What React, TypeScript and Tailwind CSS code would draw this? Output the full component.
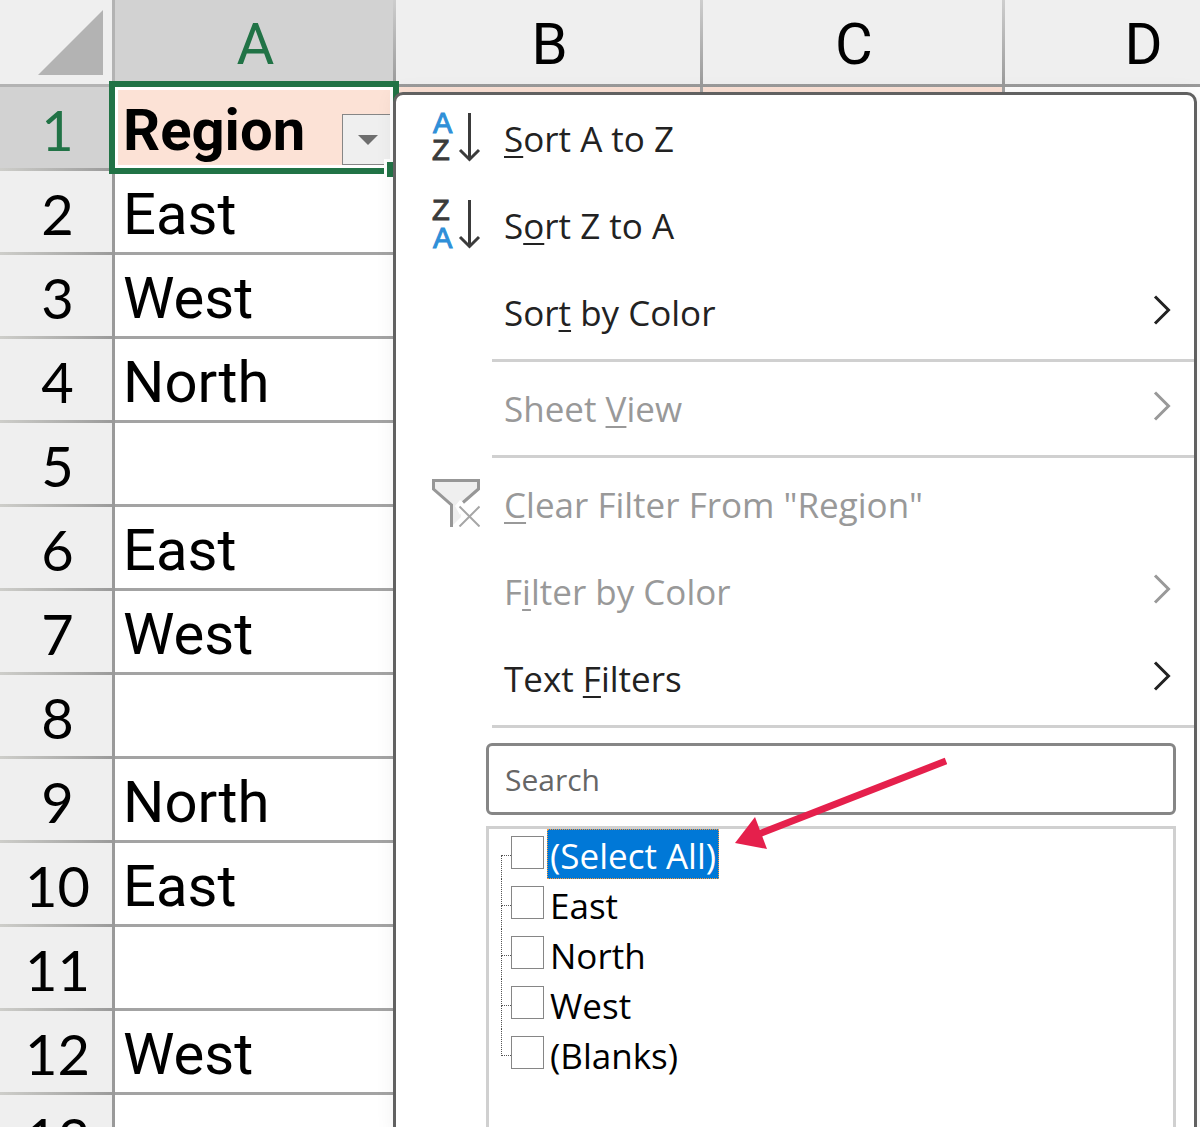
import React from 'react';

const columns = ['A', 'B', 'C', 'D'];

const rows = ['Region', 'East', 'West', 'North', '', 'East', 'West', '', 'North', 'East', '', 'West', ''];

const filterValues = ['(Select All)', 'East', 'North', 'West', '(Blanks)'];

const SortIcon = ({ descending = false }: { descending?: boolean }) => (
  <svg
    width="48"
    height="48"
    viewBox="0 0 48 48"
    className="overflow-visible font-['Liberation_Sans',sans-serif] text-[29px]"
    strokeWidth="1"
  >
    <text x="1" y={descending ? 48 : 20} fill="#2f8fd8" stroke="#2f8fd8">A</text>
    <text x="0" y={descending ? 20 : 47} fill="#3b3b3b" stroke="#3b3b3b">Z</text>
    <path d="M37.5 0V46M28 37L37.5 46.5L47 37" fill="none" stroke="#3b3b3b" strokeWidth="3" />
  </svg>
);

const ClearFilterIcon = () => (
  <svg width="48" height="48" viewBox="0 0 48 48" fill="none">
    <path d="M1.5 1.5H46.5V10L28 27L29 37L19.5 46V26L1.5 10Z" fill="#efefef" />
    <path d="M23 27L28 21L34 25L31 30L28 36Z" fill="#fff" />
    <path d="M21 26L29 38L21 46Z" fill="#efefef" />
    <path d="M19.5 48V26L1.5 10V1.5H46.5V10L31 23.5" stroke="#979797" strokeWidth="3" />
    <path d="M27.5 27.5L47.5 47.5M47.5 27.5L27.5 47.5" stroke="#a6a6a6" strokeWidth="2" />
  </svg>
);

const Chevron = () => (
  <svg width="18" height="30" viewBox="0 0 18 30" fill="none" className="mb-1.5 mr-[23px]">
    <path d="M2 1.5L15.5 15L2 28.5" stroke="currentColor" strokeWidth="3" />
  </svg>
);

type MenuItemProps = {
  icon?: React.ReactNode;
  disabled?: boolean;
  submenu?: boolean;
  children: React.ReactNode;
};

const MenuItem = ({ icon, disabled, submenu, children }: MenuItemProps) => (
  <button
    type="button"
    disabled={disabled}
    className="flex h-[87px] w-full shrink-0 items-center gap-6 pl-9 text-left text-[#222] disabled:text-[#999]"
  >
    <span className="h-[51px] w-12 shrink-0">{icon}</span>
    <span className="flex-1 whitespace-nowrap">{children}</span>
    {submenu && <Chevron />}
  </button>
);

const Key = ({ children }: { children: React.ReactNode }) => (
  <u className="decoration-2 underline-offset-4">{children}</u>
);

const Separator = () => <hr className="my-[3px] ml-24 h-[3px] shrink-0 border-0 bg-[#d0d0d0]" />;

const Sheet = () => (
  <table className="w-full min-w-[1282px] table-fixed border-separate border-spacing-0 font-[Roboto,sans-serif] text-[58px] leading-none text-black">
    <colgroup>
      <col className="w-[115px]" />
      <col className="w-[281px]" />
      <col className="w-[307px]" />
      <col className="w-[302px]" />
      <col />
    </colgroup>
    <thead>
      <tr className="h-[87px]">
        <td className="border-b-3 border-r-3 border-[#b3b3b3] bg-[#efefef] p-0">
          <svg width="65" height="65" viewBox="0 0 65 65" className="ml-auto mr-[9px]">
            <path d="M65 0V65H0Z" fill="#b3b3b3" />
          </svg>
        </td>
        {columns.map((name) => (
          <th
            key={name}
            scope="col"
            className={`border-b-3 border-r-3 p-0 pl-[3px] pt-1 font-normal [border-image:linear-gradient(to_bottom,#cfcfcf,#999)_3] ${
              name === 'A' ? 'bg-[#d2d2d2] text-[#217346]' : 'bg-[#efefef]'
            }`}
          >
            {name}
          </th>
        ))}
      </tr>
    </thead>
    <tbody>
      {rows.map((value, i) => (
        <tr key={i} className="h-[84px]">
          <th
            scope="row"
            className={`border-b-3 border-r-3 p-0 pl-[3px] pt-1 font-[Lato,sans-serif] text-[56px] font-normal [border-image:linear-gradient(to_right,#cfcfcb,#999)_3] ${
              i === 0 ? 'bg-[#d2d2d2] text-[#217346]' : 'bg-[#efefef]'
            }`}
          >
            {i + 1}
          </th>
          {i === 0 ? (
            <td className="relative border-b-3 border-r-3 border-[#a3a3a3] bg-[#fce2d6] p-0 pl-2 pt-1 font-bold">
              {value}
              <button
                type="button"
                aria-label="Filter Region"
                className="absolute bottom-[3px] right-0 flex h-[51px] w-[51px] items-center justify-center border border-[#868686] bg-[#efefef]"
              >
                <svg width="20" height="10" viewBox="0 0 20 10">
                  <path d="M0 0H20L10 10Z" fill="#6e6e6e" />
                </svg>
              </button>
              {/* active cell outline and fill handle */}
              <div className="pointer-events-none absolute -inset-1.5 border-6 border-[#217346]">
                <div className="h-full border-3 border-white" />
                <div className="absolute -bottom-3 -right-3 size-[21px] border-3 border-white bg-[#217346]" />
              </div>
            </td>
          ) : (
            <td className="border-b-3 border-r-3 border-[#a3a3a3] bg-white p-0 pl-2 pt-1">{value}</td>
          )}
          <td className={`border-b-3 border-r-3 border-[#a3a3a3] ${i === 0 ? 'bg-[#fce2d6]' : 'bg-white'}`} />
          <td className={`border-b-3 border-r-3 border-[#a3a3a3] ${i === 0 ? 'bg-[#fce2d6]' : 'bg-white'}`} />
          <td className="border-r-3 border-[#a3a3a3] bg-white" />
        </tr>
      ))}
    </tbody>
  </table>
);

const FilterList = () => (
  <ul className="mt-[11px] flex-1 border-3 border-[#d0d0d0] bg-white pl-3 text-black">
    {filterValues.map((value, i) => (
      <li key={value} className="flex h-[50px]">
        <span className="flex w-[10px] flex-col">
          <span
            className={`h-[27px] border-b border-dotted border-b-[#555] ${i > 0 ? 'border-l border-l-[#555]' : ''}`}
          />
          <span className={i < filterValues.length - 1 ? 'flex-1 border-l border-dotted border-[#555]' : 'flex-1'} />
        </span>
        <input
          id={`value-${i}`}
          type="checkbox"
          className="mt-[7px] size-[33px] appearance-none border border-[#868686] bg-white"
        />
        <label
          htmlFor={`value-${i}`}
          className={`ml-[3px] whitespace-nowrap border border-dotted px-0.5 leading-[52px] ${
            i === 0 ? 'border-[#ff9a3c] bg-[#0078d7] text-white' : 'border-transparent'
          }`}
        >
          {value}
        </label>
      </li>
    ))}
  </ul>
);

const FilterMenu = () => (
  <div className="absolute -bottom-3 left-[393px] right-[3px] top-[92px] flex flex-col rounded-[10px] border-3 border-[#616161] bg-white font-['Open_Sans',sans-serif] text-[35px] leading-none shadow-[0_0_20px_rgba(0,0,0,0.06)]">
    <MenuItem icon={<SortIcon />}><Key>S</Key>ort A to Z</MenuItem>
    <MenuItem icon={<SortIcon descending />}>S<Key>o</Key>rt Z to A</MenuItem>
    <MenuItem submenu>Sor<Key>t</Key> by Color</MenuItem>
    <Separator />
    <MenuItem disabled submenu>Sheet <Key>V</Key>iew</MenuItem>
    <Separator />
    <MenuItem disabled icon={<ClearFilterIcon />}><Key>C</Key>lear Filter From "Region"</MenuItem>
    <MenuItem disabled submenu>F<Key>i</Key>lter by Color</MenuItem>
    <MenuItem submenu>Text <Key>F</Key>ilters</MenuItem>
    <Separator />
    <div className="relative ml-[90px] mr-[18px] mt-3 flex flex-1 flex-col">
      <input
        type="text"
        aria-label="Search"
        placeholder="Search"
        className="h-[72px] w-full rounded-md border-3 border-[#868686] bg-white px-4 text-[30px] placeholder:text-[#666]"
      />
      <FilterList />
      <svg width="212" height="94" viewBox="0 0 212 94" className="pointer-events-none absolute left-[249px] top-3">
        <path d="M211 6L24 79" stroke="#e5204c" strokeWidth="7" />
        <path d="M0 88L20 62L32 94Z" fill="#e5204c" />
      </svg>
    </div>
  </div>
);

const App = () => (
  <main className="relative h-screen overflow-hidden bg-white">
    <Sheet />
    <FilterMenu />
  </main>
);

export default App;
